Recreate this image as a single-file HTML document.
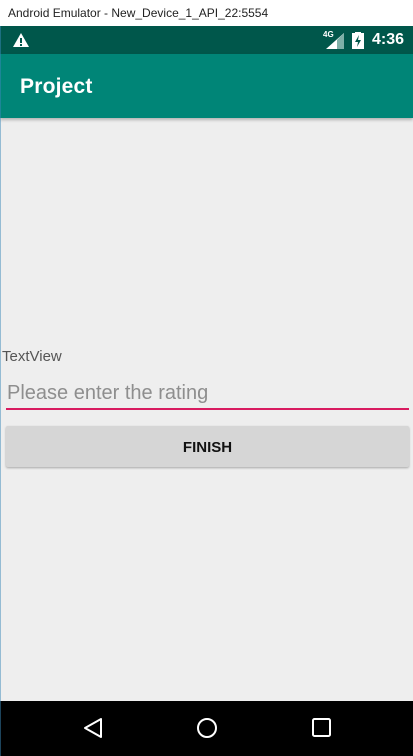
<!DOCTYPE html>
<html><head><style>
*{margin:0;padding:0;box-sizing:border-box}
body{width:413px;height:756px;overflow:hidden;background:#eeeeee;font-family:"Liberation Sans",sans-serif;position:relative}
.t{position:absolute;left:0;top:0;width:413px;height:26px;background:#fff;font-size:12px;color:#222;padding:6px 0 0 8px}
.s{position:absolute;left:0;top:26px;width:413px;height:28px;background:#00574b}
.a{position:absolute;left:0;top:54px;width:413px;height:64px;background:#008577;box-shadow:0 2px 3px rgba(0,0,0,.25)}
.a span{position:absolute;left:20px;top:21px;color:#fff;font-size:21px;font-weight:bold;letter-spacing:0.2px}
.n{position:absolute;left:0;top:701px;width:413px;height:55px;background:#000}
.edge{position:absolute;left:0;top:26px;width:1px;height:730px;background:#3a87b8;opacity:.5}
</style></head><body>
<div class="t">Android Emulator - New_Device_1_API_22:5554</div>
<div class="s">
<svg style="position:absolute;left:12px;top:6px" width="18" height="16"><path d="M9 1 L17 15 L1 15 Z" fill="#fff"/><rect x="8" y="6" width="2" height="5" fill="#00574b"/><rect x="8" y="12" width="2" height="2" fill="#00574b"/></svg>
<span style="position:absolute;left:323px;top:4px;color:#fff;font-size:8px;font-weight:bold">4G</span>
<svg style="position:absolute;left:325px;top:7px" width="20" height="16"><path d="M19 0 L19 16 L1 16 Z" fill="#fff"/><path d="M19 0 L19 16 L12 16 L12 7 Z" fill="#7fb0a8"/></svg>
<svg style="position:absolute;left:352px;top:6px" width="12" height="17"><rect x="0" y="1" width="12" height="16" fill="#fff"/><rect x="3" y="0" width="6" height="2" fill="#fff"/><path d="M7 3 L3 10 L6 10 L5 15 L9 8 L6 8 Z" fill="#00574b"/></svg>
<span style="position:absolute;left:372px;top:5px;color:#fff;font-size:16px;font-weight:bold">4:36</span>
</div>
<div class="a"><span>Project</span></div>
<div style="position:absolute;left:2px;top:348px;font-size:15px;color:#555">TextView</div>
<div style="position:absolute;left:7px;top:382px;font-size:20px;color:#8e8e8e">Please enter the rating</div>
<div style="position:absolute;left:6px;top:408px;width:403px;height:2px;background:#d81b60"></div>
<div style="position:absolute;left:6px;top:426px;width:403px;height:41px;background:#d6d6d6;border-radius:2px;box-shadow:0 1px 2px rgba(0,0,0,.3);text-align:center;line-height:43px;font-size:15px;font-weight:bold;color:#111">FINISH</div>
<div class="n">
<svg style="position:absolute;left:82px;top:16px" width="22" height="22"><path d="M19 2 L19 20 L3 11 Z" fill="none" stroke="#fff" stroke-width="2" stroke-linejoin="round"/></svg>
<svg style="position:absolute;left:196px;top:16px" width="22" height="22"><circle cx="11" cy="11" r="9" fill="none" stroke="#fff" stroke-width="2"/></svg>
<svg style="position:absolute;left:311px;top:16px" width="22" height="22"><rect x="2" y="2" width="17" height="17" rx="1.5" fill="none" stroke="#fff" stroke-width="2"/></svg>
</div>
<div class="edge"></div>
</body></html>
